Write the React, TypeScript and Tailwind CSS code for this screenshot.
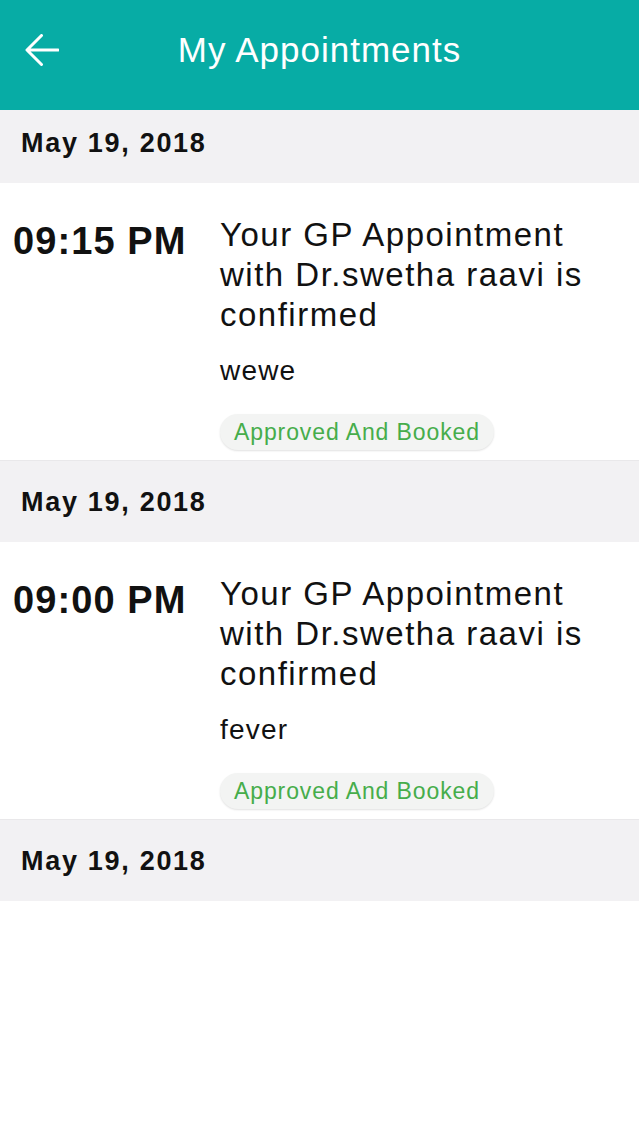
import React from "react";

const font = { fontFamily: '"Liberation Sans", Arial, Helvetica, sans-serif' };

function DateBar({ first }: { first?: boolean }) {
  return (
    <div
      className={
        first
          ? "h-[73px] pb-[8px] flex items-center bg-[#f2f1f3] pl-[21px]"
          : "h-[82px] flex items-center bg-[#f2f1f3] pl-[21px] border-t border-[#e9e8ea]"
      }
    >
      <span className="text-[27px] leading-[30px] font-bold tracking-[1.7px] text-[#111]">
        May 19, 2018
      </span>
    </div>
  );
}

function Item({ time, note }: { time: string; note: string }) {
  return (
    <div className="h-[277px] flex pt-[32px] pr-[20px] bg-white">
      <div className="w-[220px] shrink-0 pl-[13px]">
        <div className="mt-[6px] text-[38px] leading-[40px] font-bold tracking-[1.1px] text-[#111]">
          {time}
        </div>
      </div>
      <div className="flex-1 flex flex-col items-start">
        <div className="text-[33px] leading-[40px] tracking-[1.5px] text-[#111]">
          Your GP Appointment with Dr.swetha raavi is confirmed
        </div>
        <div className="mt-[20px] text-[28px] leading-[32px] tracking-[1.2px] text-[#111]">
          {note}
        </div>
        <div className="mt-[27px] h-[36px] flex items-center px-[14px] rounded-full bg-[#f3f4f3] shadow-[0_1px_2px_rgba(0,0,0,0.12)]">
          <span className="text-[23px] leading-[36px] tracking-[0.9px] text-[#46ad4b]">
            Approved And Booked
          </span>
        </div>
      </div>
    </div>
  );
}

export default function App() {
  return (
    <div className="w-[639px] min-h-[1136px] bg-white" style={font}>
      <div className="h-[110px] bg-[#07aca5] flex items-center pb-[10px]">
        <div className="w-[70px] pl-[25px] flex items-center">
          <svg width="34" height="32" viewBox="0 0 34 32" fill="none">
            <path
              d="M33 16H2.5M16.5 1.5L2 16l14.5 14.5"
              stroke="white"
              strokeWidth="3"
              strokeLinecap="round"
              strokeLinejoin="round"
            />
          </svg>
        </div>
        <div className="flex-1 text-center text-white text-[35px] leading-[40px] tracking-[1px]">
          My Appointments
        </div>
        <div className="w-[70px]" />
      </div>
      <DateBar first />
      <Item time="09:15 PM" note="wewe" />
      <DateBar />
      <Item time="09:00 PM" note="fever" />
      <DateBar />
    </div>
  );
}
